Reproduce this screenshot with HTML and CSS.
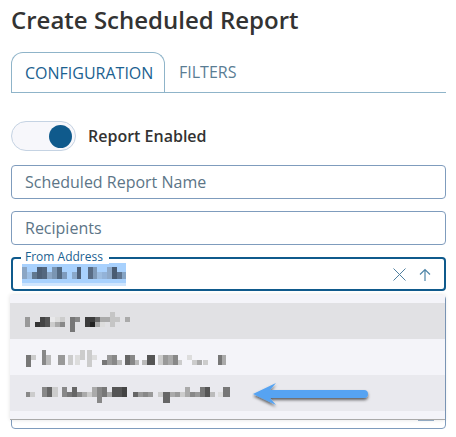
FILE: index.html
```html
<!DOCTYPE html>
<html lang="en">
<head>
    <meta charset="UTF-8">
    <meta name="viewport" content="width=device-width, initial-scale=1.0">
    <title>Create Scheduled Report</title>
    <link rel="stylesheet" href="styles.css">
</head>
<body>
    <div class="main">
        <h1 class="title">Create Scheduled Report</h1>

        <div class="tabs">
            <div class="tab active">CONFIGURATION</div>
            <div class="tab">FILTERS</div>
        </div>

        <div class="enabled">
            <div class="toggle"><span class="knob"></span></div>
            <span class="enabled-label">Report Enabled</span>
        </div>

        <div class="field">Scheduled Report Name</div>
        <div class="field">Recipients</div>

        <div class="field focused">
            <span class="legend">From Address</span>
            <!-- blurred value -->
            <div class="selected">
                <svg class="mosaic" width="104" height="20" viewBox="0 0 104 20">
                    <rect x="0" y="4" width="5" height="12" fill="#8ba6c4"/>
                    <rect x="5" y="9" width="5" height="7" fill="#9dbfe4"/>
                    <rect x="10" y="9" width="5" height="7" fill="#61788f"/>
                    <rect x="15" y="4" width="5" height="12" fill="#4d5f75"/>
                    <rect x="20" y="4" width="5" height="12" fill="#54677e"/>
                    <rect x="25" y="9" width="5" height="7" fill="#8ba6c4"/>
                    <rect x="30" y="4" width="5" height="12" fill="#7a95b2"/>
                    <rect x="35" y="4" width="5" height="12" fill="#546a82"/>
                    <rect x="40" y="9" width="5" height="7" fill="#7e9bbd"/>
                    <rect x="50" y="9" width="5" height="7" fill="#8aa8c9"/>
                    <rect x="55" y="4" width="4" height="12" fill="#4d6078"/>
                    <rect x="66" y="4" width="5" height="12" fill="#586c85"/>
                    <rect x="71" y="4" width="4" height="12" fill="#7f9ab8"/>
                    <rect x="75" y="9" width="5" height="7" fill="#9dbde0"/>
                    <rect x="80" y="9" width="5" height="7" fill="#93b3d8"/>
                    <rect x="85" y="4" width="5" height="12" fill="#8ea9c8"/>
                    <rect x="90" y="4" width="5" height="12" fill="#4a5c72"/>
                    <rect x="95" y="9" width="5" height="7" fill="#5f7590"/>
                    <rect x="100" y="9" width="4" height="7" fill="#85a4c5"/>
                </svg>
            </div>
            <div class="actions">
                <svg width="13" height="13" viewBox="0 0 13 13"><path d="M.5.500l12 12M12.500.500l-12 12" stroke="#4f7f9f" fill="none"/></svg>
                <svg width="12" height="13" viewBox="0 0 12 13"><path d="M6 13V1.500M1 6.500l5-5 5 5" stroke="#4f86a8" stroke-width="1.200" fill="none"/></svg>
            </div>
        </div>

        <div class="field under"><span class="grip"></span></div>

        <div class="dropdown">
            <div class="option hover">
                <svg class="mosaic" width="210" height="24" viewBox="0 0 210 24">
                    <rect x="0" y="8" width="5" height="10" fill="#999"/>
                    <rect x="10" y="13" width="5" height="5" fill="#333"/>
                    <rect x="15" y="8" width="5" height="10" fill="#444"/>
                    <rect x="20" y="8" width="5" height="10" fill="#555"/>
                    <rect x="25" y="8" width="5" height="5" fill="#e8e8ea"/>
                    <rect x="25" y="13" width="5" height="5" fill="#ccc"/>
                    <rect x="30" y="8" width="5" height="5" fill="#ddd"/>
                    <rect x="30" y="13" width="5" height="5" fill="#aaa"/>
                    <rect x="35" y="8" width="5" height="5" fill="#ccc"/>
                    <rect x="35" y="13" width="5" height="5" fill="#888"/>
                    <rect x="45" y="8" width="5" height="15" fill="#777"/>
                    <rect x="50" y="8" width="5" height="5" fill="#888"/>
                    <rect x="60" y="8" width="5" height="10" fill="#3c3c3c"/>
                    <rect x="65" y="8" width="5" height="5" fill="#3c3c3c"/>
                    <rect x="65" y="13" width="5" height="5" fill="#222"/>
                    <rect x="70" y="8" width="5" height="5" fill="#666"/>
                    <rect x="70" y="13" width="5" height="5" fill="#aaa"/>
                    <rect x="75" y="8" width="5" height="5" fill="#aaa"/>
                    <rect x="75" y="13" width="5" height="5" fill="#ddd"/>
                    <rect x="80" y="8" width="5" height="5" fill="#aaa"/>
                    <rect x="85" y="3" width="5" height="15" fill="#c5c5c5"/>
                    <rect x="90" y="8" width="5" height="5" fill="#c5c5c5"/>
                    <rect x="100" y="8" width="5" height="5" fill="#aaa"/>
                </svg>
            </div>
            <div class="option">
                <svg class="mosaic" width="210" height="24" viewBox="0 0 210 24">
                    <rect x="1" y="10" width="5" height="12" fill="#777"/>
                    <rect x="6" y="10" width="5" height="5" fill="#ccc"/>
                    <rect x="17" y="5" width="4" height="15" fill="#888"/>
                    <rect x="21" y="10" width="5" height="10" fill="#bbb"/>
                    <rect x="33" y="10" width="7" height="10" fill="#999"/>
                    <rect x="43" y="10" width="5" height="10" fill="#ccc"/>
                    <rect x="50" y="10" width="5" height="10" fill="#ddd"/>
                    <rect x="55" y="5" width="5" height="10" fill="#ccc"/>
                    <rect x="62" y="5" width="5" height="17" fill="#ccc"/>
                    <rect x="67" y="10" width="5" height="5" fill="#ddd"/>
                    <rect x="77" y="15" width="5" height="5" fill="#777"/>
                    <rect x="82" y="10" width="5" height="10" fill="#999"/>
                    <rect x="87" y="10" width="5" height="10" fill="#888"/>
                    <rect x="92" y="15" width="5" height="5" fill="#bbb"/>
                    <rect x="100" y="10" width="5" height="10" fill="#666"/>
                    <rect x="105" y="10" width="5" height="10" fill="#888"/>
                    <rect x="110" y="15" width="4" height="5" fill="#bbb"/>
                    <rect x="117" y="15" width="5" height="5" fill="#bbb"/>
                    <rect x="122" y="10" width="8" height="10" fill="#555"/>
                    <rect x="133" y="10" width="5" height="10" fill="#ccc"/>
                    <rect x="138" y="10" width="5" height="10" fill="#999"/>
                    <rect x="143" y="10" width="5" height="10" fill="#aaa"/>
                    <rect x="148" y="10" width="5" height="10" fill="#888"/>
                    <rect x="153" y="15" width="4" height="5" fill="#ccc"/>
                    <rect x="162" y="10" width="5" height="5" fill="#ddd"/>
                    <rect x="167" y="15" width="5" height="5" fill="#ccc"/>
                    <rect x="172" y="15" width="5" height="5" fill="#aaa"/>
                    <rect x="178" y="15" width="5" height="5" fill="#ccc"/>
                    <rect x="193" y="10" width="4" height="10" fill="#777"/>
                    <rect x="197" y="10" width="4" height="10" fill="#aaa"/>
                </svg>
            </div>
            <div class="option active">
                <svg class="mosaic" width="210" height="24" viewBox="0 0 210 24">
                    <rect x="1" y="11" width="4" height="5" fill="#888"/>
                    <rect x="5" y="11" width="5" height="5" fill="#ccc"/>
                    <rect x="17" y="6" width="5" height="10" fill="#888"/>
                    <rect x="22" y="6" width="5" height="10" fill="#666"/>
                    <rect x="27" y="6" width="6" height="10" fill="#ccc"/>
                    <rect x="37" y="6" width="5" height="10" fill="#888"/>
                    <rect x="42" y="11" width="5" height="5" fill="#777"/>
                    <rect x="47" y="6" width="5" height="10" fill="#666"/>
                    <rect x="52" y="11" width="5" height="5" fill="#888"/>
                    <rect x="57" y="11" width="5" height="5" fill="#aaa"/>
                    <rect x="62" y="11" width="5" height="5" fill="#ccc"/>
                    <rect x="67" y="6" width="5" height="10" fill="#aaa"/>
                    <rect x="72" y="6" width="5" height="16" fill="#888"/>
                    <rect x="77" y="6" width="5" height="10" fill="#777"/>
                    <rect x="82" y="11" width="5" height="5" fill="#aaa"/>
                    <rect x="87" y="6" width="5" height="10" fill="#555"/>
                    <rect x="92" y="6" width="5" height="10" fill="#555"/>
                    <rect x="97" y="6" width="5" height="10" fill="#444"/>
                    <rect x="108" y="11" width="5" height="5" fill="#666"/>
                    <rect x="113" y="11" width="5" height="5" fill="#999"/>
                    <rect x="118" y="11" width="5" height="5" fill="#888"/>
                    <rect x="123" y="11" width="5" height="5" fill="#999"/>
                    <rect x="133" y="11" width="5" height="5" fill="#ccc"/>
                    <rect x="138" y="11" width="7" height="11" fill="#666"/>
                    <rect x="145" y="11" width="5" height="5" fill="#aaa"/>
                    <rect x="150" y="11" width="5" height="5" fill="#999"/>
                    <rect x="155" y="11" width="5" height="5" fill="#ccc"/>
                    <rect x="160" y="6" width="5" height="10" fill="#aaa"/>
                    <rect x="165" y="11" width="5" height="5" fill="#888"/>
                    <rect x="170" y="11" width="5" height="5" fill="#999"/>
                    <rect x="175" y="6" width="5" height="10" fill="#777"/>
                    <rect x="180" y="6" width="5" height="10" fill="#555"/>
                    <rect x="185" y="11" width="5" height="5" fill="#bbb"/>
                    <rect x="193" y="11" width="5" height="5" fill="#ddd"/>
                    <rect x="198" y="6" width="7" height="10" fill="#777"/>
                </svg>
                <svg class="arrow" width="122" height="36" viewBox="0 0 122 36">
                    <defs>
                        <filter id="arrowshadow" x="-10%" y="-30%" width="120%" height="170%">
                            <feDropShadow dx="0" dy="2" stdDeviation="1.500" flood-color="#000" flood-opacity=".6"/>
                        </filter>
                    </defs>
                    <path d="M1 18L24 7 18 14H112a4 4 0 0 1 0 8H18l6 7z" fill="#56a3f2" filter="url(#arrowshadow)"/>
                </svg>
            </div>
        </div>
    </div>
</body>
</html>
```
FILE: styles.css
```css
body{
    margin: 0;
    background-color: white;
    font-family: "Open Sans", sans-serif;
}
.main{
    position: relative;
    height: 437px;
    padding: 0 10px 0 11px;
    box-sizing: border-box;
    overflow: hidden;
}
.title{
    margin: 0;
    padding-top: 3px;
    height: 52px;
    box-sizing: border-box;
    font-size: 24px;
    line-height: 34px;
    font-weight: 600;
    color: #333;
}
.tabs{
    display: flex;
    height: 41px;
    box-sizing: border-box;
    border-bottom: 1px solid #8fb4c9;
}
.tab{
    padding: 0 14px;
    font-size: 16px;
    line-height: 40px;
    color: #5a7d94;
}
.tab.active{
    width: 154px;
    box-sizing: border-box;
    height: 41px;
    padding: 0 13px;
    border: 1px solid #8fb4c9;
    border-bottom: none;
    border-radius: 12px 12px 0 0;
    line-height: 41px;
    color: #1b6190;
}
.enabled{
    display: flex;
    align-items: center;
    gap: 12px;
    margin-top: 28px;
    height: 30px;
}
.toggle{
    display: flex;
    justify-content: flex-end;
    align-items: center;
    width: 65px;
    height: 30px;
    padding: 0 3px;
    box-sizing: border-box;
    border: 1px solid #c5d3e3;
    border-radius: 15px;
    background-color: #f7f7fb;
}
.knob{
    width: 23px;
    height: 23px;
    border-radius: 50%;
    background-color: #0f5a8c;
}
.enabled-label{
    font-size: 16px;
    font-weight: 600;
    color: #333;
}
.field{
    position: relative;
    display: flex;
    align-items: center;
    height: 34px;
    margin-top: 12px;
    padding: 0 13px;
    box-sizing: border-box;
    border: 1px solid #7f9cbd;
    border-radius: 4px;
    font-size: 16px;
    color: #5c7587;
}
.enabled + .field{
    margin-top: 14px;
}
.focused{
    border: 2px solid #0f5a8c;
    padding: 0 0 0 9px;
    justify-content: space-between;
}
.legend{
    position: absolute;
    left: 8px;
    top: -9px;
    padding: 0 6px 0 4px;
    background-color: white;
    font-size: 12px;
    line-height: 14px;
    color: #1b6190;
}
.selected{
    width: 104px;
    height: 23px;
    background: linear-gradient(#a8d1fd 20px, #cfe5fd 20px);
}
.mosaic{
    display: block;
    flex: none;
}
.actions{
    display: flex;
    align-items: center;
    gap: 13px;
    padding-right: 13px;
}
.under{
    height: 134px;
    margin-top: 4px;
}
.grip{
    position: absolute;
    right: 11px;
    bottom: 7px;
    width: 16px;
    height: 3px;
    background-color: #9bb3cc;
}
.dropdown{
    position: absolute;
    left: 10px;
    top: 295px;
    width: 435px;
    padding: 8px 0;
    background-color: #f4f4f9;
    border-bottom: 1px solid #aaa;
    box-shadow: 0 0 4px rgba(0, 0, 0, 0.12);
}
.option{
    position: relative;
    display: flex;
    align-items: center;
    height: 36px;
    padding-left: 15px;
}
.option.hover{
    background-color: #e1e1e4;
}
.option.active{
    background-color: #e9e9ee;
}
.arrow{
    position: absolute;
    left: 242px;
    top: 1px;
}
```
